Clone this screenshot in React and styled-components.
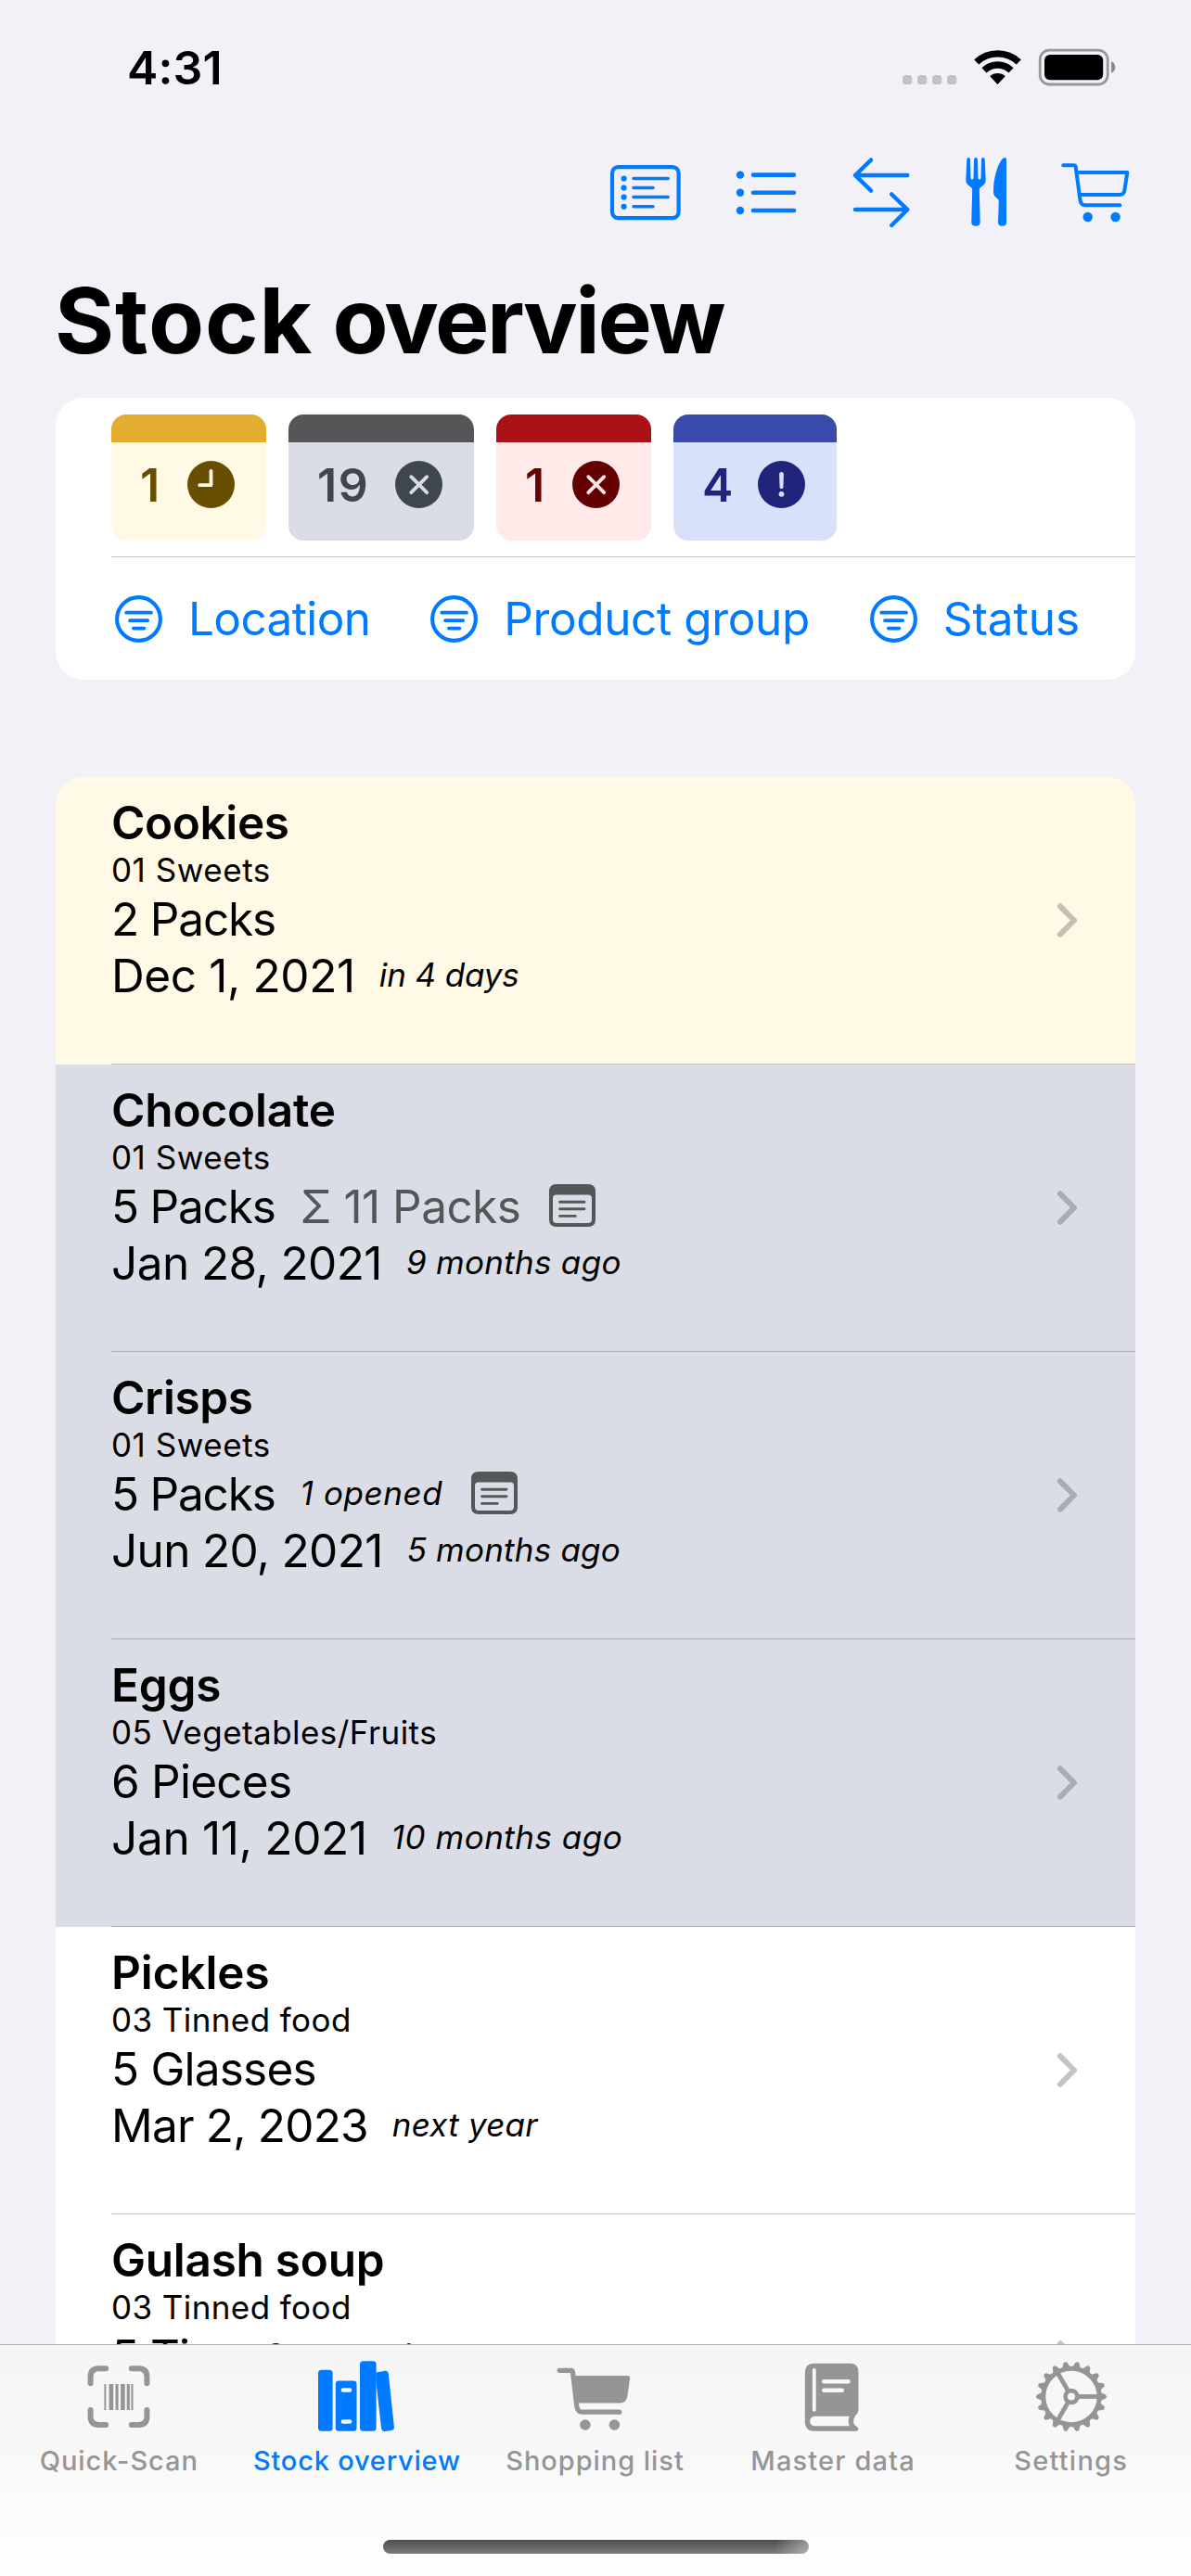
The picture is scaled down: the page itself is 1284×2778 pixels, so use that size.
import React from 'react';
import styled, { createGlobalStyle } from 'styled-components';

const BLUE = '#007aff';
const GREY = '#959595';
const NOTE = '#555657';
const SEPARATOR = 'rgba(60, 60, 67, 0.29)';

const GlobalStyle = createGlobalStyle`
  * { box-sizing: border-box; }
  body { margin: 0; background: #f2f1f7; }
`;

const Screen = styled.div`
  display: flex;
  flex-direction: column;
  width: 1284px;
  height: 2778px;
  overflow: hidden;
  background: #f2f1f7;
  color: #000;
  font-family: Inter, "Liberation Sans", sans-serif;
  white-space: nowrap;
`;

const Content = styled.main`
  flex: 1;
  min-height: 0;
  overflow: hidden;
`;

const Glyph = styled.svg`
  display: block;
  flex: none;
  overflow: visible;
`;

const StatusBar = styled.header`
  display: flex;
  justify-content: space-between;
  height: 170px;
  padding: 43px 82px 0 137px;
`;

const StatusGroup = styled.div`
  padding-top: 9px;
`;

const Clock = styled.div`
  font-size: 50px;
  font-weight: 600;
  line-height: 60px;
  letter-spacing: 0.15px;
`;

const Toolbar = styled.nav`
  display: flex;
  justify-content: flex-end;
  gap: 60px;
  height: 76px;
  padding-right: 66px;
`;

const Title = styled.h1`
  margin: 40px 0 24px 59px;
  font-size: 98px;
  font-weight: 700;
  line-height: 119px;
  word-spacing: -2px;
`;

const TitleWord = styled.span`
  letter-spacing: ${(p) => p.$tracking}px;
`;

const Card = styled.section`
  display: flex;
  flex-direction: column;
  margin: 0 60px;
  border-radius: 30px;
  background: #fff;
  overflow: hidden;
`;

const TileRow = styled.div`
  display: flex;
  gap: 24px;
  height: 172px;
  margin-left: 60px;
  padding-top: 18px;
  border-bottom: 1px solid ${SEPARATOR};
`;

const Tile = styled.div`
  display: flex;
  align-items: center;
  justify-content: space-between;
  width: ${(p) => p.$width}px;
  height: 136px;
  padding: 0 34px 15px 31px;
  border-top: 30px solid ${(p) => p.$band};
  border-radius: 16px;
  background: ${(p) => p.$bg};
  color: ${(p) => p.$ink};
`;

const TileCount = styled.span`
  font-size: 50px;
  font-weight: 600;
  line-height: 60px;
  letter-spacing: ${(p) => p.$tracking || 0}px;
`;

const FilterRow = styled.div`
  display: flex;
  align-items: center;
  justify-content: space-between;
  height: 132px;
  padding: 0 60px 0 64px;
  color: ${BLUE};
`;

const Filter = styled.div`
  display: flex;
  align-items: center;
  gap: 28px;
`;

const Body = styled.span`
  font-size: 49.5px;
  line-height: 60px;
  letter-spacing: ${(p) => p.$tracking}px;
  color: ${(p) => p.$color || 'inherit'};
`;

const ProductList = styled(Card)`
  margin-top: 105px;
  border-radius: 30px 30px 0 0;
`;

const Row = styled.article`
  display: flex;
  height: 310px;
  padding-left: 60px;
  background: ${(p) => p.$bg};
`;

const RowInner = styled.div`
  display: flex;
  flex: 1;
  align-items: center;
  justify-content: space-between;
  padding: 0 63px 1px 0;
  border-bottom: 1px solid ${SEPARATOR};
`;

const Details = styled.div`
  display: flex;
  flex-direction: column;
  align-self: flex-start;
  padding-top: 19px;
`;

const Name = styled.h2`
  margin: 0;
  font-size: 49.5px;
  font-weight: 600;
  line-height: 60px;
  letter-spacing: ${(p) => p.$tracking}px;
`;

const Group = styled.div`
  font-size: 35px;
  line-height: 42px;
  letter-spacing: ${(p) => p.$tracking}px;
`;

const Line = styled.div`
  display: flex;
  align-items: center;
  gap: ${(p) => p.$gap}px;
  height: ${(p) => p.$height}px;
`;

const Hint = styled.em`
  padding-bottom: 2px;
  font-size: 35px;
  line-height: 42px;
  letter-spacing: ${(p) => p.$tracking}px;
`;

const NoteWrap = styled.span`
  padding: 0 0 2px 4px;
`;

const TabBar = styled.footer`
  display: flex;
  flex-direction: column;
  justify-content: space-between;
  align-items: center;
  height: 250px;
  padding-bottom: 24px;
  border-top: 1px solid #acacb0;
  background: linear-gradient(#f5f5f6, #f8f8f9 45%, #fcfdfd 85%);
`;

const Tabs = styled.div`
  display: flex;
  width: 100%;
  padding: 17px 1px 0 0;
`;

const Tab = styled.div`
  display: flex;
  flex: 1 1 0;
  flex-direction: column;
  align-items: center;
  gap: 14px;
  color: ${(p) => (p.$active ? BLUE : GREY)};
  font-size: 29px;
  font-weight: 500;
  line-height: 35px;
  letter-spacing: ${(p) => p.$tracking}px;
`;

const HomeIndicator = styled.div`
  width: 459px;
  height: 15px;
  border-radius: 8px;
  background:
    linear-gradient(90deg, transparent 92%, rgba(255, 255, 255, 0.4)),
    linear-gradient(#4c4c4c, #7c7c7c);
`;

/* ---- status icons ---- */

const StatusIcons = () => (
  <Glyph width="230" height="44" viewBox="972 52 230 44">
    <g fill="#c2c1c6">
      {[973, 989, 1005, 1021].map((x) => (
        <rect key={x} x={x} y="81" width="10.3" height="10" rx="3.6" />
      ))}
    </g>
    <g fill="none" stroke="#000" strokeWidth="7.3">
      <path d="M1052.7 66.9 A33.2 33.2 0 0 1 1098.3 66.9" />
      <path d="M1061 75.8 A21 21 0 0 1 1090 75.8" />
    </g>
    <path d="M1075.5 91 L1067.2 82.3 A12 12 0 0 1 1083.8 82.3 Z" />
    <rect x="1121.2" y="54.2" width="73" height="36.8" rx="10" fill="none" stroke="#97969a" strokeWidth="2.8" />
    <rect x="1126" y="59" width="63.2" height="27.2" rx="6" />
    <path d="M1198 66.3 Q1202.3 68 1202.3 72.5 Q1202.3 77 1198 78.7 Z" fill="#8d8d90" />
  </Glyph>
);

/* ---- toolbar icons ---- */

const ListBoxIcon = () => (
  <Glyph width="76" height="76" viewBox="658 170 76 76" fill="none" stroke={BLUE} strokeLinecap="round">
    <rect x="660" y="180.2" width="71.6" height="55" rx="6.5" strokeWidth="4.2" />
    <path strokeWidth="3.5" d="M683 192.5 H720.2 M683 202.5 H704 M683 212.5 H720.2 M683 222.8 H704" />
    <g fill={BLUE} stroke="none">
      {[192.5, 202.5, 212.5, 222.8].map((y) => (
        <circle key={y} cx="672.6" cy={y} r="3.1" />
      ))}
    </g>
  </Glyph>
);

const BulletIcon = () => (
  <Glyph width="65" height="76" viewBox="794 170 65 76">
    <g fill={BLUE}>
      {[188.6, 207.7, 227].map((y) => (
        <circle key={y} cx="798" cy={y} r="4.2" />
      ))}
    </g>
    <path d="M812 188.6 H856 M812 207.7 H856 M812 227 H856" stroke={BLUE} strokeWidth="4.6" strokeLinecap="round" />
  </Glyph>
);

const SwapIcon = () => (
  <Glyph width="62" height="76" viewBox="919 170 62 76" fill="none" stroke={BLUE} strokeWidth="4.5" strokeLinecap="round" strokeLinejoin="round">
    <path d="M978.3 189 H922 M939 172.5 L922 189 L939 205.7" />
    <path d="M922 226 H978.3 M961.2 209.5 L978.3 226 L961.2 243" />
  </Glyph>
);

const CutleryIcon = () => (
  <Glyph width="44" height="76" viewBox="1041 170 44 76" fill={BLUE}>
    <path d="M1042.3 172 Q1042.5 170 1044.2 170 Q1046 170 1046 172 L1046.5 192 Q1046.7 193.5 1048 193.5 Q1049.3 193.5 1049.5 192 L1050 172 Q1050.2 170 1052 170 Q1053.8 170 1054 172 L1054.5 192 Q1054.7 193.5 1056 193.5 Q1057.3 193.5 1057.5 192 L1058 172 Q1058 170 1059.8 170 Q1061.6 170 1061.7 172 L1062.7 194 Q1062.7 198 1059 200.5 Q1055.7 202.5 1055.8 204 L1056.7 239.5 Q1056.7 243.8 1052 243.8 Q1047.3 243.8 1047.3 239.5 L1048.2 204 Q1048.3 202.5 1045 200.5 Q1041.3 198 1041.3 194 Z" />
    <path d="M1083.2 170 Q1085 170 1085 172 V239.5 Q1085 243.8 1080.5 243.8 Q1076 243.8 1076 239.5 L1076.8 217 Q1076.8 214.5 1074.5 213.5 Q1071 211.5 1071 206.5 C1071 192 1075.5 177 1080.8 171.3 Q1082 170 1083.2 170 Z" />
  </Glyph>
);

const CartIcon = () => (
  <Glyph width="73" height="76" viewBox="1145 170 73 76" fill="none" stroke={BLUE} strokeWidth="4" strokeLinecap="round" strokeLinejoin="round">
    <path d="M1146.2 178.3 H1157.6 Q1159.4 178.3 1159.7 180 L1164.5 215.8 Q1165.3 221.3 1169.5 221.3 H1207.3" />
    <path d="M1161.5 186 H1215.3 L1212.4 205 Q1211.6 210 1207.5 210 H1165" />
    <g fill={BLUE} stroke="none">
      <circle cx="1172.7" cy="234" r="5.2" />
      <circle cx="1202.6" cy="234" r="5.2" />
    </g>
  </Glyph>
);

/* ---- badge, filter and row icons ---- */

const BADGES = {
  clock: <path d="M25.5 10.8 V26.2 H13.2" />,
  cross: <path d="M17.3 17.2 L34.2 34.2 M34.2 17.2 L17.3 34.2" />,
  alert: (
    <g stroke="none">
      <path d="M23.1 14.2 Q23.2 12 25.5 12 Q27.8 12 27.9 14.2 L27.4 28.5 Q27.2 30.2 25.5 30.2 Q23.8 30.2 23.6 28.5 Z" />
      <circle cx="25.5" cy="35.8" r="2.9" />
    </g>
  ),
};

const Badge = ({ kind, bg }) => (
  <Glyph width="51" height="51" viewBox="0 0 51 51">
    <circle cx="25.5" cy="25.5" r="25.5" fill="currentColor" />
    <g fill={kind === 'alert' ? bg : 'none'} stroke={bg} strokeWidth="3.8" strokeLinecap="round" strokeLinejoin="round">
      {BADGES[kind]}
    </g>
  </Glyph>
);

const FilterIcon = () => (
  <Glyph width="51" height="51" viewBox="0 0 51 51" fill="none" stroke="currentColor" strokeLinecap="round">
    <circle cx="25.5" cy="25.5" r="23.4" strokeWidth="4.1" />
    <path d="M12.2 18.7 H39 M16 27.2 H35.2 M19.8 35.6 H31.4" strokeWidth="3.7" />
  </Glyph>
);

const NoteIcon = () => (
  <NoteWrap>
    <Glyph width="50" height="46" viewBox="0 0 50 46">
      <path
        fill={NOTE}
        fillRule="evenodd"
        d="M8 0 H42 Q50 0 50 8 V38 Q50 46 42 46 H8 Q0 46 0 38 V8 Q0 0 8 0 Z M7.5 11.5 Q4 11.5 4 15 V38 Q4 42 8 42 H42 Q46 42 46 38 V15 Q46 11.5 42.5 11.5 Z"
      />
      <path d="M11.6 19.2 H38 M11.6 26.8 H38 M11.6 34.4 H28.3" stroke={NOTE} strokeWidth="2.9" strokeLinecap="round" />
    </Glyph>
  </NoteWrap>
);

const Chevron = () => (
  <Glyph width="21" height="37" viewBox="0 0 21 37" fill="none" stroke="rgba(60,60,67,0.3)" strokeWidth="6" strokeLinecap="round" strokeLinejoin="round">
    <path d="M3 3.3 L18 18.5 L3 33.7" />
  </Glyph>
);

/* ---- tab icons ---- */

const ScanIcon = () => (
  <Glyph width="80" height="76" viewBox="88.4 2546 80 76">
    <path
      fill="none"
      stroke={GREY}
      strokeWidth="6"
      strokeLinecap="round"
      d="M98 2570.3 V2563 Q98 2554.3 107 2554.3 H114.5 M142.2 2554.3 H149.8 Q158.8 2554.3 158.8 2563 V2570.3 M158.8 2599 V2606.3 Q158.8 2615 149.8 2615 H142.2 M114.5 2615 H107 Q98 2615 98 2606.3 V2599"
    />
    <g fill={GREY}>
      {[[112.8, 1.9], [118, 4.6], [124.9, 3.1], [130.5, 4.6], [137.1, 3.2], [141.8, 2.1]].map(([x, w]) => (
        <rect key={x} x={x} y="2571" width={w} height="28" />
      ))}
    </g>
  </Glyph>
);

const BooksIcon = () => (
  <Glyph width="84" height="76" viewBox="343.2 2546 84 76" fill={BLUE}>
    <rect x="343.2" y="2555.7" width="15.6" height="66" rx="3.5" />
    <path
      fillRule="evenodd"
      d="M365.5 2567.6 H381.2 Q384.7 2567.6 384.7 2571 V2618.2 Q384.7 2621.7 381.2 2621.7 H365.5 Q362 2621.7 362 2618.2 V2571 Q362 2567.6 365.5 2567.6 Z M370 2575.3 a2.2 2.2 0 0 0 0 4.4 h7.4 a2.2 2.2 0 0 0 0 -4.4 Z M370 2609.3 a2.2 2.2 0 0 0 0 4.4 h7.4 a2.2 2.2 0 0 0 0 -4.4 Z"
    />
    <rect x="388.2" y="2546.3" width="17.6" height="75.4" rx="3.5" />
    <path d="M405.6 2558.4 L415.2 2556.8 Q418.5 2556.4 419 2559.8 L425.1 2617.3 Q425.4 2620.4 422.3 2620.9 L415.2 2621.9 Q411.7 2622.2 411.3 2618.8 L405.6 2568 Z" />
  </Glyph>
);

const FilledCartIcon = () => (
  <Glyph width="84" height="76" viewBox="599.5 2546 84 76" fill={GREY}>
    <path
      fill="none"
      stroke={GREY}
      strokeWidth="5.2"
      strokeLinecap="round"
      strokeLinejoin="round"
      d="M603.6 2556.3 H616 Q617.8 2556.3 618 2558.2 L622.3 2595 Q623.2 2601.2 628.5 2601.2 H668.3"
    />
    <path d="M619 2562 H677 Q679.9 2562 679.6 2565 L677 2583.5 Q675.8 2591.6 668.5 2591.6 H622 Z" />
    <circle cx="631.4" cy="2615" r="5.8" />
    <circle cx="662.9" cy="2615" r="5.8" />
  </Glyph>
);

const BookIcon = () => (
  <Glyph width="84" height="76" viewBox="856.2 2546 84 76">
    <path
      fill={GREY}
      fillRule="evenodd"
      d="M878 2548.7 H916.5 Q925.7 2548.7 925.7 2558 V2599 Q925.7 2602 922.8 2604.5 Q920.3 2608 920.3 2611 Q920.3 2614.5 923.5 2616.5 Q925.7 2618 925.7 2619.5 Q925.5 2621.8 923 2621.8 H878 Q868 2621.8 868 2612 V2558.5 Q868 2548.7 878 2548.7 Z M878.5 2605.7 A5.2 5.2 0 0 0 878.5 2616.2 H916.2 Q913.5 2611 916 2605.7 Z"
    />
    <g stroke="#f7f7f8" strokeLinecap="round">
      <path d="M878 2556 V2598.8" strokeWidth="3.8" />
      <path d="M888.5 2568.2 H914.7 M888.5 2577.8 H908" strokeWidth="4.5" />
    </g>
  </Glyph>
);

const GearIcon = () => (
  <Glyph width="84" height="76" viewBox="-42 -38.5 84 76" fill="none" stroke={GREY} strokeWidth="4.8">
    <circle r="30.2" strokeWidth="5" />
    <circle r="6.4" strokeWidth="4.6" />
    {[0, 120, 240].map((a) => (
      <path key={a} d="M8 0 H29" transform={`rotate(${a})`} />
    ))}
    {Array.from({ length: 18 }, (_, i) => (
      <path key={i} d="M31.5 -4.4 L37 -2 Q38.8 0 37 2 L31.5 4.4 Z" fill={GREY} stroke="none" transform={`rotate(${i * 20})`} />
    ))}
  </Glyph>
);

/* ---- data ---- */

const TILES = [
  { count: '1', width: 167, kind: 'clock', band: '#e3ae2f', bg: '#fff9e5', ink: '#684f00' },
  { count: '19', width: 200, tracking: 1.5, kind: 'cross', band: '#555657', bg: '#dadde6', ink: '#3f474d' },
  { count: '1', width: 167, kind: 'cross', band: '#ab1218', bg: '#ffe9e9', ink: '#640000' },
  { count: '4', width: 176, kind: 'alert', band: '#3a4aab', bg: '#d9e1fa', ink: '#20247b' },
];

const FILTERS = [
  ['Location', -0.62],
  ['Product group', -0.38],
  ['Status', -0.05],
];

const YELLOW = '#fff9e5';
const SLATE = '#dadde5';

const PRODUCTS = [
  { bg: YELLOW, name: ['Cookies', -0.4], group: ['01 Sweets', 0.54], amount: ['2 Packs', -1.15], date: ['Dec 1, 2021', -0.37], due: ['in 4 days', -0.13] },
  { bg: SLATE, name: ['Chocolate', -0.18], group: ['01 Sweets', 0.54], amount: ['5 Packs', -1.2], sum: ['Σ 11 Packs', -0.55], note: true, date: ['Jan 28, 2021', -0.58], due: ['9 months ago', 0.29] },
  { bg: SLATE, name: ['Crisps', -0.36], group: ['01 Sweets', 0.54], amount: ['5 Packs', -1.2], opened: ['1 opened', 0.6], note: true, date: ['Jun 20, 2021', -0.68], due: ['5 months ago', 0.21] },
  { bg: SLATE, name: ['Eggs', -0.2], group: ['05 Vegetables/Fruits', 0.45], amount: ['6 Pieces', -0.75], date: ['Jan 11, 2021', -0.3], due: ['10 months ago', 0.5] },
  { bg: '#fff', name: ['Pickles', -0.1], group: ['03 Tinned food', 0.41], amount: ['5 Glasses', -0.8], date: ['Mar 2, 2023', -0.8], due: ['next year', 0.2] },
  { bg: '#fff', name: ['Gulash soup', -0.27], group: ['03 Tinned food', 0.41], amount: ['5 Tins', -1], opened: ['2 opened', 0.3], date: ['Mar 2, 2023', -0.8], due: ['next year', 0.2] },
];

const TABS = [
  ['Quick-Scan', ScanIcon, 0.97],
  ['Stock overview', BooksIcon, 0.78],
  ['Shopping list', FilledCartIcon, 0.96],
  ['Master data', BookIcon, 1.13],
  ['Settings', GearIcon, 1.23],
];

const Product = ({ bg, name, group, amount, sum, opened, note, date, due }) => (
  <Row $bg={bg}>
    <RowInner>
      <Details>
        <Name $tracking={name[1]}>{name[0]}</Name>
        <Group $tracking={group[1]}>{group[0]}</Group>
        <Line $height={64} $gap={27}>
          <Body $tracking={amount[1]}>{amount[0]}</Body>
          {sum && <Body $tracking={sum[1]} $color={NOTE}>{sum[0]}</Body>}
          {opened && <Hint $tracking={opened[1]}>{opened[0]}</Hint>}
          {note && <NoteIcon />}
        </Line>
        <Line $height={58} $gap={26}>
          <Body $tracking={date[1]}>{date[0]}</Body>
          <Hint $tracking={due[1]}>{due[0]}</Hint>
        </Line>
      </Details>
      <Chevron />
    </RowInner>
  </Row>
);

export default function App() {
  return (
    <Screen>
      <GlobalStyle />
      <Content>
        <StatusBar>
          <Clock>4:31</Clock>
          <StatusGroup>
            <StatusIcons />
          </StatusGroup>
        </StatusBar>
        <Toolbar>
          <ListBoxIcon />
          <BulletIcon />
          <SwapIcon />
          <CutleryIcon />
          <CartIcon />
        </Toolbar>
        <Title>
          <TitleWord $tracking={0.9}>Stock</TitleWord>{' '}
          <TitleWord $tracking={-2.4}>overview</TitleWord>
        </Title>
        <Card>
          <TileRow>
            {TILES.map((t, i) => (
              <Tile key={i} $width={t.width} $band={t.band} $bg={t.bg} $ink={t.ink}>
                <TileCount $tracking={t.tracking}>{t.count}</TileCount>
                <Badge kind={t.kind} bg={t.bg} />
              </Tile>
            ))}
          </TileRow>
          <FilterRow>
            {FILTERS.map(([label, tracking]) => (
              <Filter key={label}>
                <FilterIcon />
                <Body $tracking={tracking}>{label}</Body>
              </Filter>
            ))}
          </FilterRow>
        </Card>
        <ProductList>
          {PRODUCTS.map((p) => (
            <Product key={p.name[0]} {...p} />
          ))}
        </ProductList>
      </Content>
      <TabBar>
        <Tabs>
          {TABS.map(([label, Icon, tracking]) => (
            <Tab key={label} $active={label === 'Stock overview'} $tracking={tracking}>
              <Icon />
              <span>{label}</span>
            </Tab>
          ))}
        </Tabs>
        <HomeIndicator />
      </TabBar>
    </Screen>
  );
}
